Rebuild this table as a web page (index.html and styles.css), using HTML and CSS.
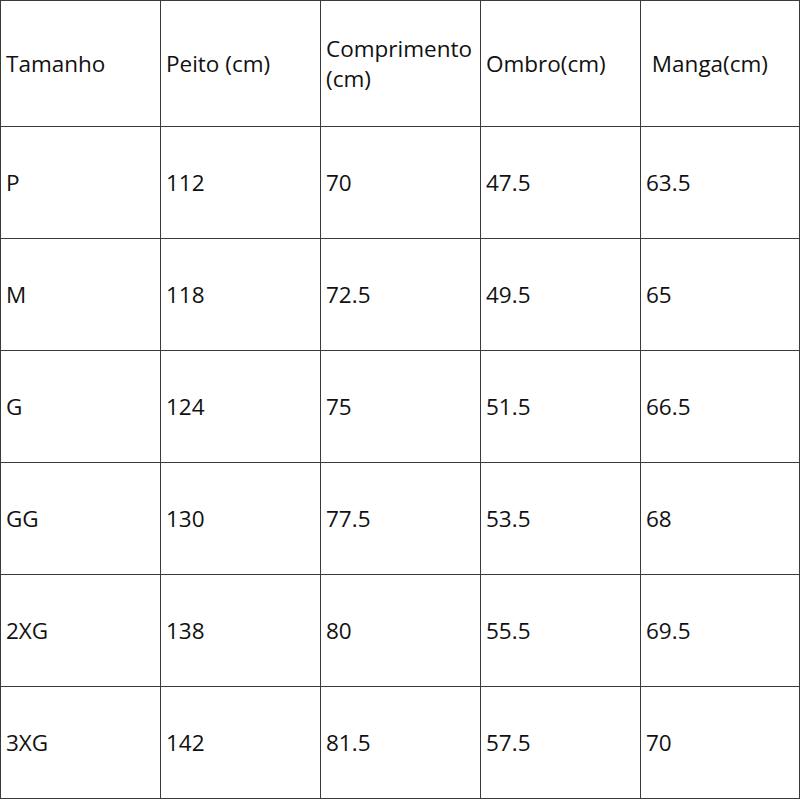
FILE: index.html
```html
<!DOCTYPE html>
<html lang="pt">
<head>
<meta charset="utf-8">
<title>Tabela de medidas</title>
<link rel="stylesheet" href="styles.css">
</head>
<body>
<div class="size-table">
  <div class="cell head">Tamanho</div>
  <div class="cell head">Peito (cm)</div>
  <div class="cell head">Comprimento (cm)</div>
  <div class="cell head">Ombro(cm)</div>
  <div class="cell head">&nbsp;Manga(cm)</div>

  <div class="cell">P</div><div class="cell">112</div><div class="cell">70</div><div class="cell">47.5</div><div class="cell">63.5</div>
  <div class="cell">M</div><div class="cell">118</div><div class="cell">72.5</div><div class="cell">49.5</div><div class="cell">65</div>
  <div class="cell">G</div><div class="cell">124</div><div class="cell">75</div><div class="cell">51.5</div><div class="cell">66.5</div>
  <div class="cell">GG</div><div class="cell">130</div><div class="cell">77.5</div><div class="cell">53.5</div><div class="cell">68</div>
  <div class="cell">2XG</div><div class="cell">138</div><div class="cell">80</div><div class="cell">55.5</div><div class="cell">69.5</div>
  <div class="cell">3XG</div><div class="cell">142</div><div class="cell">81.5</div><div class="cell">57.5</div><div class="cell">70</div>
</div>
</body>
</html>
```

FILE: styles.css
```css
html, body {
  margin: 0;
  padding: 0;
  background: #fff;
}

.size-table {
  width: 800px;
  box-sizing: border-box;
  display: grid;
  grid-template-columns: 159px 159px 159px 159px 158px;
  grid-template-rows: 125px repeat(6, 111px);
  gap: 1px;
  padding: 1px;
  background: #3a3a3a;
  font-family: "Open Sans", "Liberation Sans", sans-serif;
  font-size: 22.5px;
  color: #111;
}

.cell {
  background: #fff;
  display: flex;
  align-items: center;
  padding: 0 4px 0 5px;
  line-height: 30px;
}
```
